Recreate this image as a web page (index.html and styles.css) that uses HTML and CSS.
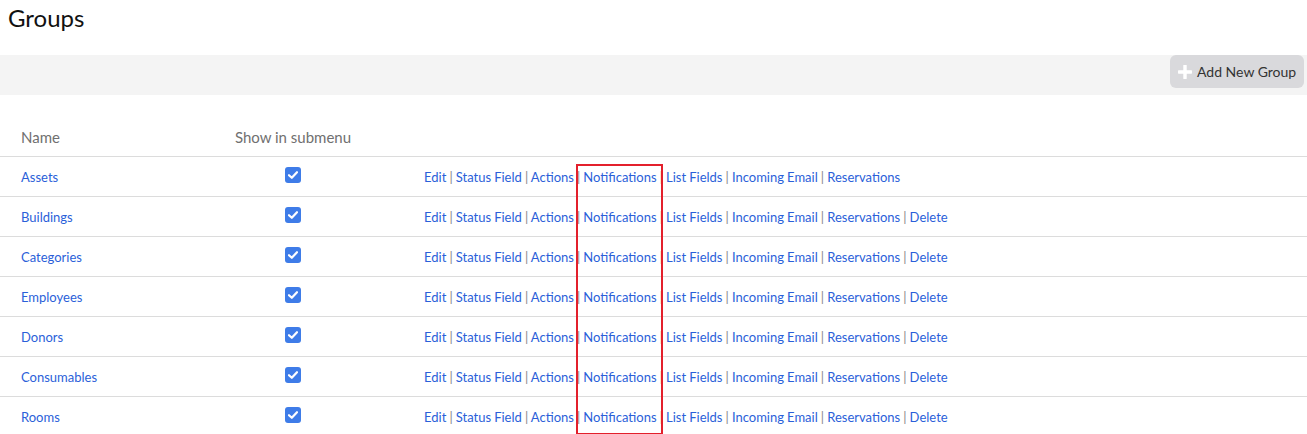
FILE: index.html
```html
<!DOCTYPE html>
<html>
<head>
<meta charset="utf-8">
<link rel="stylesheet" href="styles.css">
</head>
<body>
<h1 class="title">Groups</h1>
<div class="toolbar">
  <button class="add-btn"><svg class="plus" width="14" height="14" viewBox="0 0 14 14"><rect x="5.3" y="0" width="3.4" height="14" rx="0.6" fill="#fff"/><rect x="0" y="5.3" width="14" height="3.4" rx="0.6" fill="#fff"/></svg>Add New Group</button>
</div>
<table class="groups">
  <thead>
    <tr><th class="c-name">Name</th><th class="c-show">Show in submenu</th><th class="c-act"></th></tr>
  </thead>
  <tbody>
    <tr><td class="c-name"><a>Assets</a></td><td class="c-show"><span class="chk"><svg width="10" height="8" viewBox="0 0 10 8"><path d="M1 4.2 L3.8 6.8 L9 1.2" stroke="#fff" stroke-width="2.2" fill="none" stroke-linecap="round" stroke-linejoin="round"/></svg></span></td><td class="c-act"><a>Edit</a> <i>|</i> <a>Status Field</a> <i>|</i> <a>Actions</a> <i>|</i> <a>Notifications</a> <i>|</i> <a>List Fields</a> <i>|</i> <a>Incoming Email</a> <i>|</i> <a>Reservations</a></td></tr>
    <tr><td class="c-name"><a>Buildings</a></td><td class="c-show"><span class="chk"><svg width="10" height="8" viewBox="0 0 10 8"><path d="M1 4.2 L3.8 6.8 L9 1.2" stroke="#fff" stroke-width="2.2" fill="none" stroke-linecap="round" stroke-linejoin="round"/></svg></span></td><td class="c-act"><a>Edit</a> <i>|</i> <a>Status Field</a> <i>|</i> <a>Actions</a> <i>|</i> <a>Notifications</a> <i>|</i> <a>List Fields</a> <i>|</i> <a>Incoming Email</a> <i>|</i> <a>Reservations</a> <i>|</i> <a>Delete</a></td></tr>
    <tr><td class="c-name"><a>Categories</a></td><td class="c-show"><span class="chk"><svg width="10" height="8" viewBox="0 0 10 8"><path d="M1 4.2 L3.8 6.8 L9 1.2" stroke="#fff" stroke-width="2.2" fill="none" stroke-linecap="round" stroke-linejoin="round"/></svg></span></td><td class="c-act"><a>Edit</a> <i>|</i> <a>Status Field</a> <i>|</i> <a>Actions</a> <i>|</i> <a>Notifications</a> <i>|</i> <a>List Fields</a> <i>|</i> <a>Incoming Email</a> <i>|</i> <a>Reservations</a> <i>|</i> <a>Delete</a></td></tr>
    <tr><td class="c-name"><a>Employees</a></td><td class="c-show"><span class="chk"><svg width="10" height="8" viewBox="0 0 10 8"><path d="M1 4.2 L3.8 6.8 L9 1.2" stroke="#fff" stroke-width="2.2" fill="none" stroke-linecap="round" stroke-linejoin="round"/></svg></span></td><td class="c-act"><a>Edit</a> <i>|</i> <a>Status Field</a> <i>|</i> <a>Actions</a> <i>|</i> <a>Notifications</a> <i>|</i> <a>List Fields</a> <i>|</i> <a>Incoming Email</a> <i>|</i> <a>Reservations</a> <i>|</i> <a>Delete</a></td></tr>
    <tr><td class="c-name"><a>Donors</a></td><td class="c-show"><span class="chk"><svg width="10" height="8" viewBox="0 0 10 8"><path d="M1 4.2 L3.8 6.8 L9 1.2" stroke="#fff" stroke-width="2.2" fill="none" stroke-linecap="round" stroke-linejoin="round"/></svg></span></td><td class="c-act"><a>Edit</a> <i>|</i> <a>Status Field</a> <i>|</i> <a>Actions</a> <i>|</i> <a>Notifications</a> <i>|</i> <a>List Fields</a> <i>|</i> <a>Incoming Email</a> <i>|</i> <a>Reservations</a> <i>|</i> <a>Delete</a></td></tr>
    <tr><td class="c-name"><a>Consumables</a></td><td class="c-show"><span class="chk"><svg width="10" height="8" viewBox="0 0 10 8"><path d="M1 4.2 L3.8 6.8 L9 1.2" stroke="#fff" stroke-width="2.2" fill="none" stroke-linecap="round" stroke-linejoin="round"/></svg></span></td><td class="c-act"><a>Edit</a> <i>|</i> <a>Status Field</a> <i>|</i> <a>Actions</a> <i>|</i> <a>Notifications</a> <i>|</i> <a>List Fields</a> <i>|</i> <a>Incoming Email</a> <i>|</i> <a>Reservations</a> <i>|</i> <a>Delete</a></td></tr>
    <tr><td class="c-name"><a>Rooms</a></td><td class="c-show"><span class="chk"><svg width="10" height="8" viewBox="0 0 10 8"><path d="M1 4.2 L3.8 6.8 L9 1.2" stroke="#fff" stroke-width="2.2" fill="none" stroke-linecap="round" stroke-linejoin="round"/></svg></span></td><td class="c-act"><a>Edit</a> <i>|</i> <a>Status Field</a> <i>|</i> <a>Actions</a> <i>|</i> <a>Notifications</a> <i>|</i> <a>List Fields</a> <i>|</i> <a>Incoming Email</a> <i>|</i> <a>Reservations</a> <i>|</i> <a>Delete</a></td></tr>
  </tbody>
</table>
<div class="highlight"></div>
</body>
</html>
```
FILE: styles.css
```css
html, body {
  margin: 0;
  padding: 0;
  background: #fff;
  font-family: Lato, "Liberation Sans", sans-serif;
}
.title {
  margin: 0;
  padding: 4px 8px 0;
  height: 55px;
  box-sizing: border-box;
  font-size: 24px;
  line-height: 28px;
  font-weight: 400;
  color: #111;
}
.toolbar {
  height: 40px;
  background: #f4f4f4;
  display: flex;
  justify-content: flex-end;
  align-items: flex-start;
  padding-right: 3px;
}
.add-btn {
  height: 33px;
  width: 134px;
  border: none;
  border-radius: 6px;
  background: #d9d9dc;
  color: #333;
  font-family: Lato, "Liberation Sans", sans-serif;
  font-size: 14px;
  display: flex;
  align-items: center;
  gap: 5px;
  padding: 0 0 0 8px;
}
.plus { flex: none; }
.groups {
  width: 100%;
  border-collapse: collapse;
  margin-top: 22px;
}
.groups th {
  font-weight: 400;
  font-size: 15px;
  color: #707070;
  height: 39px;
  text-align: left;
  padding: 0;
}
.groups tr {
  border-bottom: 1px solid #dcdcdc;
}
.groups td {
  height: 39px;
  padding: 0;
  font-size: 13px;
  vertical-align: middle;
}
.c-name { width: 154px; padding-left: 21px !important; }
.groups .c-show { width: 236px; text-align: center; }
.c-act { padding-left: 13px !important; word-spacing: -0.25px; }
.groups a { color: #2b5fd9; }
.groups i { font-style: normal; color: #888; }
.chk {
  display: inline-flex;
  width: 16px;
  height: 16px;
  border-radius: 3px;
  background: #3e7ce8;
  align-items: center;
  justify-content: center;
  vertical-align: middle;
  position: relative;
  top: -2px;
}
.highlight {
  position: absolute;
  left: 576px;
  top: 164px;
  width: 83px;
  height: 267px;
  border: 2px solid #e3202c;
}
```
